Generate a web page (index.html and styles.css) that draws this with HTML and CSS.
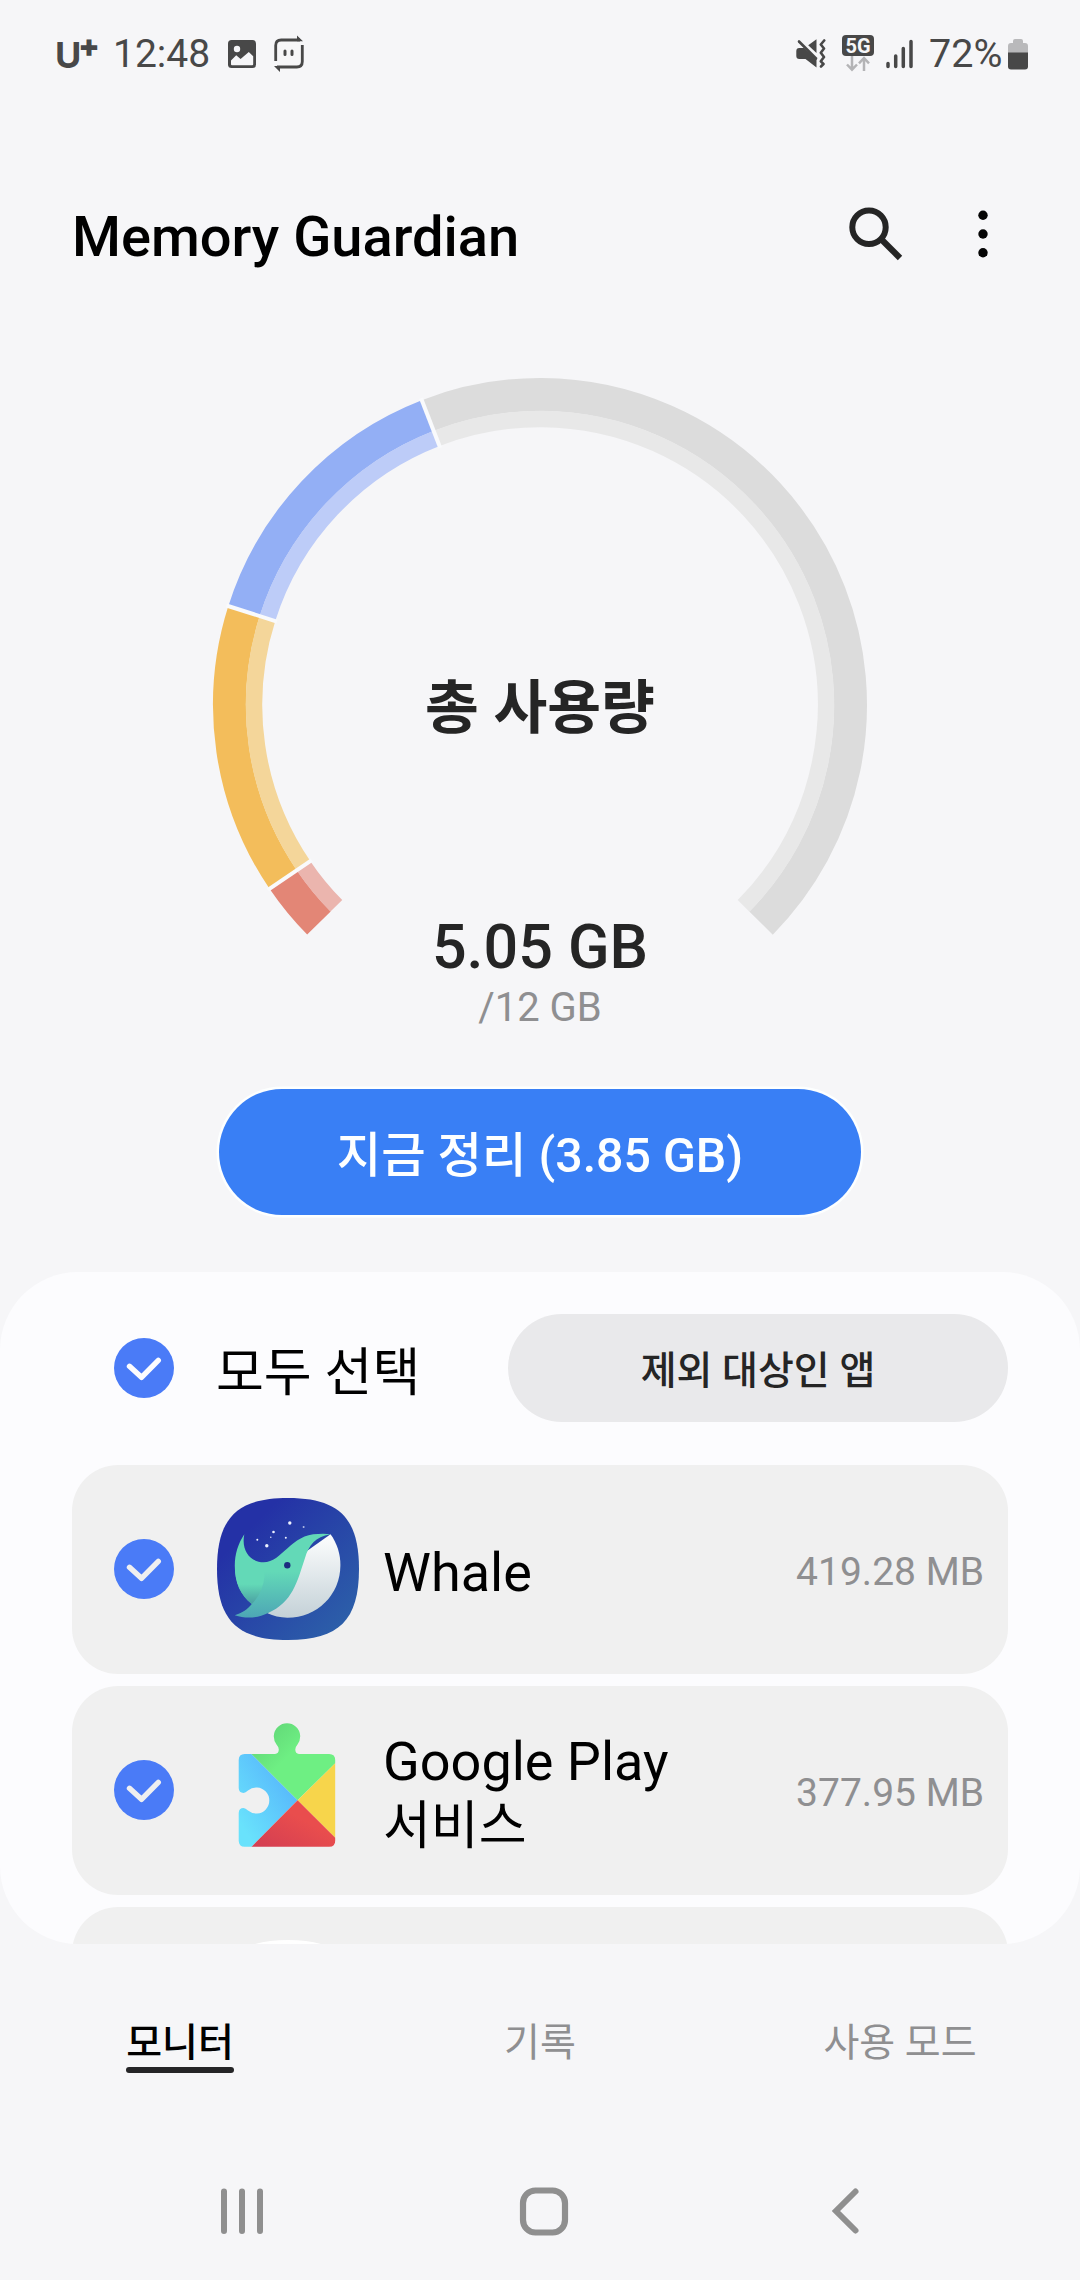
FILE: index.html
```html
<!DOCTYPE html>
<html lang="ko">
<head>
<meta charset="utf-8">
<title>Memory Guardian</title>
<link rel="stylesheet" href="styles.css">
</head>
<body>
<svg class="defs" width="0" height="0" aria-hidden="true">
  <symbol id="check" viewBox="0 0 60 60">
    <circle cx="30" cy="30" r="30" fill="#4a7bf7"/>
    <path d="M15.500 28.300 27.500 39.300 44.300 22.300" fill="none" stroke="currentColor" stroke-width="5.400" stroke-linecap="round" stroke-linejoin="round"/>
  </symbol>
</svg>
<div class="screen">
  <div class="status">
    <span class="carrier">U<span class="plus">+</span></span>
    <span class="clock">12:48</span>
    <svg class="photo" width="28" height="28" viewBox="0 0 28 28">
      <rect width="28" height="28" rx="3.500" fill="#484848"/>
      <circle cx="9" cy="9" r="3.200" fill="#f6f6f8"/>
      <path d="M3 20.500 8.200 15.200 12.600 19 20.800 12 25.200 16.200V24.200q0 1-1 1H4q-1 0-1-1Z" fill="#f6f6f8"/>
    </svg>
    <svg class="routine" width="32" height="38" viewBox="0 0 32 38">
      <path d="M2.700 26V10.500q0-5.500 5.500-5.500H27" fill="none" stroke="#484848" stroke-width="2.800"/>
      <path d="M29.300 10V26.500q0 5.500-5.500 5.500H4" fill="none" stroke="#484848" stroke-width="2.800"/>
      <path d="M24 .5 30 6.300H24ZM1 31h6v6Z" fill="#484848"/>
      <path d="M12 16v3.500M19 16v3.500" stroke="#484848" stroke-width="3" stroke-linecap="round"/>
    </svg>
    <svg class="mute" width="30" height="30" viewBox="0 0 30 30">
      <path d="M.3 12q0-3 3-3H8L20.500 20V28.500L9.500 20H3.300q-3 0-3-3Z" fill="#484848"/>
      <path d="M12.200 6.300 20.500.2V14Z" fill="#484848"/>
      <path d="M3 2.500 20 19.500" stroke="#484848" stroke-width="2.600" stroke-linecap="round"/>
      <path d="M28.200 1.500 24.800 5.500 28 9.500 24.800 13.800 28 18 24.800 22.300 27.500 25 25 27.500" fill="none" stroke="#484848" stroke-width="2.600" stroke-linecap="round" stroke-linejoin="round"/>
    </svg>
    <div class="network">
      <span class="badge">5G</span>
      <svg width="24" height="16" viewBox="0 0 24 16" fill="none" stroke="#b4b4b6" stroke-width="2.500">
        <path d="M6 0V13.500M1 8.500 6 13.700 11 8.500M18 15V2M13 7.300 18 2 23 7.300"/>
      </svg>
    </div>
    <svg class="signal" width="28" height="30" viewBox="0 0 28 30" stroke="#484848" stroke-width="3.500" stroke-linecap="round">
      <path d="M2 24.500v3M9.700 17v10.500M17.300 9.500v18M25 2.500v25"/>
    </svg>
    <span class="percent">72%</span>
    <svg class="battery" width="20" height="32" viewBox="0 0 20 32">
      <path d="M5 3q0-2 2-2h6q2 0 2 2v2h2q3 0 3 3v7H0V8q0-3 3-3h2Z" fill="#b9b9bb"/>
      <path d="M0 14.500H20V28.500q0 3-3 3H3q-3 0-3-3Z" fill="#484848"/>
    </svg>
  </div>

  <header class="header">
    <h1 class="title">Memory Guardian</h1>
    <svg class="search" width="54" height="54" viewBox="0 0 54 54" fill="none" stroke="#252525">
      <circle cx="20" cy="20.200" r="16.700" stroke-width="6"/>
      <path d="M32.500 32.500 51 51" stroke-width="6.200"/>
    </svg>
    <svg class="more" width="10" height="48" viewBox="0 0 10 48" fill="#050505">
      <circle cx="5" cy="5.200" r="4.700"/><circle cx="5" cy="24" r="4.700"/><circle cx="5" cy="42.800" r="4.700"/>
    </svg>
  </header>

  <section class="usage">
    <svg class="gauge" width="660" height="660" viewBox="-330 -330 660 660" fill="none">
      <g stroke-width="33">
        <circle r="310.500" pathLength="360" stroke="#dcdcdc" stroke-dasharray="155.800 360" transform="rotate(248.800)"/>
        <circle r="310.500" pathLength="360" stroke="#93aff5" stroke-dasharray="51.200 360" transform="rotate(197.600)"/>
        <circle r="310.500" pathLength="360" stroke="#f3bd5b" stroke-dasharray="51.800 360" transform="rotate(145.800)"/>
        <circle r="310.500" pathLength="360" stroke="#e38676" stroke-dasharray="10.400 360" transform="rotate(135.400)"/>
      </g>
      <g stroke-width="16.500">
        <circle r="286" pathLength="360" stroke="#e8e8e8" stroke-dasharray="155.800 360" transform="rotate(248.800)"/>
        <circle r="286" pathLength="360" stroke="#bdccf8" stroke-dasharray="51.200 360" transform="rotate(197.600)"/>
        <circle r="286" pathLength="360" stroke="#f4d69a" stroke-dasharray="51.800 360" transform="rotate(145.800)"/>
        <circle r="286" pathLength="360" stroke="#ebb5ae" stroke-dasharray="10.400 360" transform="rotate(135.400)"/>
      </g>
      <g stroke="#f9fafc" stroke-width="4">
        <path d="M276 0H329" transform="rotate(145.800)"/>
        <path d="M276 0H329" transform="rotate(197.600)"/>
        <path d="M276 0H329" transform="rotate(248.800)"/>
      </g>
    </svg>
    <div class="readout">
      <div class="caption">총 사용량</div>
      <div class="used">5.05 GB</div>
      <div class="total">/12 GB</div>
    </div>
  </section>

  <button class="clean">지금 정리 (3.85 GB)</button>

  <main class="panel">
    <div class="select-all">
      <svg class="check on-panel" width="60" height="60"><use href="#check"/></svg>
      <span class="name">모두 선택</span>
      <button class="excluded">제외 대상인 앱</button>
    </div>
    <div class="apps">
      <div class="app">
        <svg class="check" width="60" height="60"><use href="#check"/></svg>
        <svg class="icon" width="142" height="142" viewBox="0 0 142 142">
          <defs>
            <linearGradient id="sea" x1="0.100" y1="0.100" x2="0.900" y2="0.900"><stop offset="0.150" stop-color="#2431a6"/><stop offset="1" stop-color="#2c5fa9"/></linearGradient>
            <linearGradient id="back" x1="0" y1="0" x2="0" y2="1"><stop offset="0.450" stop-color="#63d9b7"/><stop offset="1" stop-color="#4da6b5"/></linearGradient>
            <linearGradient id="belly" x1="0" y1="0" x2="0" y2="1"><stop offset="0" stop-color="#fdfefe"/><stop offset="1" stop-color="#c4d1d7"/></linearGradient>
            <linearGradient id="shade" x1="0" y1="0" x2="0" y2="1"><stop offset="0.450" stop-color="#63d9b7"/><stop offset="1" stop-color="#4a9fa2"/></linearGradient>
          </defs>
          <path d="M71 0C122 0 142 20 142 71S122 142 71 142 0 122 0 71 20 0 71 0Z" fill="url(#sea)"/>
          <path d="M113.500 36.300C120 45 123.400 56 123.400 67 123.400 97 100 119.700 70.400 119.700 63 119.700 56 118 50.600 115.300L80 60Z" fill="url(#belly)"/>
          <path d="M27.300 36.300C24 52 33 64.300 46.700 64.300 65 64.300 74 36 101 36Q108 35.500 113.500 36.300C98 39 92 47 88 60 80 84 76 104 50.600 115.300 42 119.500 30 121.500 17.800 117.300 25 115 31 111 34.800 106 23 97 17.800 82 17.800 68 17.800 56 21 46 27.300 36.300Z" fill="url(#back)"/>
          <path d="M18 70C18 84 23 97 34.800 106Q46 95 47.500 78L47 70Z" fill="url(#shade)"/>
          <circle cx="70.300" cy="67.300" r="3.200" fill="#1c2c80"/>
          <g fill="#eef2ff"><circle cx="72.800" cy="25" r="1.700"/><circle cx="86.600" cy="29" r="1" opacity=".7"/><circle cx="56.500" cy="34" r="1.300"/><circle cx="40.300" cy="41.700" r="1"/><circle cx="53.800" cy="39.300" r=".7"/><circle cx="68.800" cy="39.700" r="1"/><circle cx="49.800" cy="47.700" r="1.700"/></g>
        </svg>
        <span class="name">Whale</span>
        <span class="size">419.28 MB</span>
      </div>
      <div class="app">
        <svg class="check" width="60" height="60"><use href="#check"/></svg>
        <svg class="icon" width="142" height="142" viewBox="0 0 142 142">
          <defs>
            <linearGradient id="blue" x1="0.900" y1="0.200" x2="0.200" y2="0.900"><stop offset="0" stop-color="#56b4fb"/><stop offset="1" stop-color="#69e2fc"/></linearGradient>
            <linearGradient id="green" x1="0.250" y1="0.050" x2="0.550" y2="0.350"><stop offset="0" stop-color="#62d878"/><stop offset="1" stop-color="#6eef83"/></linearGradient>
            <linearGradient id="red" x1="0" y1="1" x2="0.600" y2="0.400"><stop offset="0" stop-color="#d23d52"/><stop offset="1" stop-color="#e94d4d"/></linearGradient>
            <clipPath id="piece"><path d="M27.700 35H58Q61.800 34.500 61.800 30.500 61.800 28 59.500 25.500A13.200 13.200 0 1 1 80.500 25.500Q78.300 28 78.300 30.500 78.300 34.500 82 35H112.200Q118.200 35 118.200 41V121.700Q118.200 127.700 112.200 127.700H27.700Q21.700 127.700 21.700 121.700V94Q21.900 89 26.500 89 28.500 89 31 91.500A13 13 0 1 0 31 71.500Q28.500 73.900 26.500 73.900 21.900 73.900 21.700 69V41Q21.700 35 27.700 35Z"/></clipPath>
          </defs>
          <g clip-path="url(#piece)">
            <path d="M20 35H34.400L80.600 81.300 34.400 128H20Z" fill="url(#blue)"/>
            <path d="M34.400 35V0H119V43.500L80.600 81.300Z" fill="url(#green)"/>
            <path d="M119 43.500V119.500L80.600 81.300Z" fill="#f7d54b"/>
            <path d="M34.400 128 80.600 81.300 119 119.500V128Z" fill="url(#red)"/>
          </g>
        </svg>
        <span class="name">Google Play <span class="hangul">서비스</span></span>
        <span class="size">377.95 MB</span>
      </div>
      <div class="app">
        <svg class="check" width="60" height="60"><use href="#check"/></svg>
        <svg class="icon" width="142" height="142" viewBox="0 0 142 142">
          <path d="M71 0C122 0 142 20 142 71S122 142 71 142 0 122 0 71 20 0 71 0Z" fill="#fff"/>
        </svg>
      </div>
    </div>
  </main>

  <nav class="tabs">
    <a class="tab active">모니터</a>
    <a class="tab">기록</a>
    <a class="tab">사용 모드</a>
  </nav>

  <div class="sysnav">
    <svg width="44" height="48" viewBox="0 0 44 48" stroke="#8f8f8f" stroke-width="6" stroke-linecap="round"><path d="M4 4.500v39.500M22 4.500v39.500M40 4.500v39.500"/></svg>
    <svg class="home" width="50" height="50" viewBox="0 0 50 50"><rect x="4" y="3.500" width="42" height="42" rx="12.500" fill="none" stroke="#8f8f8f" stroke-width="6.200"/></svg>
    <svg width="30" height="48" viewBox="0 0 30 48"><path d="M25.500 4.500 6 24 25.500 43.500" fill="none" stroke="#8f8f8f" stroke-width="6" stroke-linecap="round"/></svg>
  </div>
</div>
</body>
</html>
```
FILE: styles.css
```css
* { box-sizing: border-box; }

body {
  margin: 0;
  background: #f6f6f8;
  font-family: Roboto, "Noto Sans CJK KR", sans-serif;
  color: #000;
}

.defs { display: block; }

svg { display: block; flex: none; }

button {
  border: 0;
  padding: 0;
  font: inherit;
}

.screen {
  width: 1080px;
  height: 2280px;
  display: flex;
  flex-direction: column;
  overflow: hidden;
}

/* Status bar */
.status {
  height: 107px;
  flex: none;
  display: flex;
  align-items: center;
  padding: 0 52px 0 55px;
  font-size: 39.500px;
  line-height: 48px;
  color: #484848;
}

.carrier {
  display: flex;
  width: 58px;
  font: 700 36px/48px Inter, sans-serif;
  padding-top: 2px;
}

.plus {
  margin-left: -3px;
  font-size: 31px;
  font-weight: 900;
  line-height: 29px;
}

.clock {
  width: 115px;
  font-size: 39px;
}

.routine { margin-left: 17px; }

.mute { margin-left: auto; }

.network {
  width: 32px;
  margin-left: 16px;
  display: flex;
  flex-direction: column;
  align-items: center;
}

.badge {
  width: 32px;
  height: 21px;
  border-radius: 4px;
  background: #484848;
  color: #f6f6f8;
  font: 700 20px/22px Roboto, sans-serif;
  text-align: center;
}

.signal { margin-left: 12px; }

.percent { width: 79px; margin-left: 15px; }

/* Title bar */
.header {
  height: 254px;
  flex: none;
  display: flex;
  align-items: center;
  padding: 0 92px 0 72px;
}

.title {
  margin: 5px auto 0 0;
  font-size: 56px;
  font-weight: 500;
  line-height: 66px;
}

.search { margin-right: 75px; }

/* Memory gauge */
.usage {
  height: 728px;
  flex: none;
  display: grid;
  justify-items: center;
  padding-top: 14px;
}

.gauge, .readout { grid-area: 1 / 1; }

.readout {
  padding-top: 297px;
  text-align: center;
  color: #252525;
}

.caption {
  font-size: 58.500px;
  font-weight: 700;
  line-height: 72px;
}

.used {
  margin-top: 167px;
  font-size: 61px;
  font-weight: 500;
  line-height: 72px;
}

.total {
  padding-top: 1px;
  font-size: 40px;
  line-height: 48px;
  color: #8f8f91;
}

.clean {
  width: 642px;
  height: 126px;
  flex: none;
  align-self: center;
  border-radius: 63px;
  background: #397ff5;
  box-shadow: 0 0 0 2.500px #fdffff;
  color: #fdffff;
  font-size: 48.300px;
  font-weight: 500;
  line-height: 126px;
  padding-top: 4px;
}

/* App list */
.panel {
  height: 672px;
  flex: none;
  margin-top: 57px;
  border-radius: 78px;
  background: #fcfcfe;
  overflow: hidden;
  padding: 42px 72px 0;
}

.select-all {
  height: 108px;
  display: flex;
  align-items: center;
  padding-left: 42px;
}

.name {
  margin-left: 42px;
  font-size: 54px;
  line-height: 63px;
}

.select-all .name {
  padding-top: 10px;
  font-size: 52px;
}

.hangul {
  position: relative;
  top: 1px;
  font-size: 52px;
}

.check { color: #efeff0; }

.on-panel { color: #fcfcfe; }

.excluded {
  width: 500px;
  height: 108px;
  margin-left: auto;
  border-radius: 54px;
  background: #e9e9eb;
  color: #252525;
  font-size: 39px;
  font-weight: 500;
  line-height: 108px;
  padding-top: 3px;
}

.apps {
  margin-top: 43px;
  display: flex;
  flex-direction: column;
  gap: 12px;
}

.app {
  height: 209px;
  flex: none;
  display: flex;
  align-items: center;
  padding: 0 24px 1px 42px;
  border-radius: 46px;
  background: #f0f0f0;
}

.icon { margin-left: 43px; }

.app .name {
  width: 340px;
  margin-left: 24px;
  padding-top: 7px;
}

.size {
  margin-left: auto;
  padding-top: 5px;
  font-size: 39px;
  line-height: 48px;
  color: #8f8f91;
}

/* Bottom tabs */
.tabs {
  height: 216px;
  flex: none;
  display: grid;
  grid-template-columns: repeat(3, 360px);
  justify-items: center;
  align-items: start;
  padding-top: 72px;
}

.tab {
  font-size: 39px;
  line-height: 54px;
  color: #8f8f91;
}

.active {
  color: #000;
  font-weight: 500;
}

.active::after {
  content: "";
  display: block;
  height: 6px;
  margin-top: -3px;
  border-radius: 3px;
  background: #252527;
}

.sysnav {
  height: 120px;
  flex: none;
  display: flex;
  padding: 27px 0 0 220px;
}

.home { margin: 0 261px 0 255px; }
```
